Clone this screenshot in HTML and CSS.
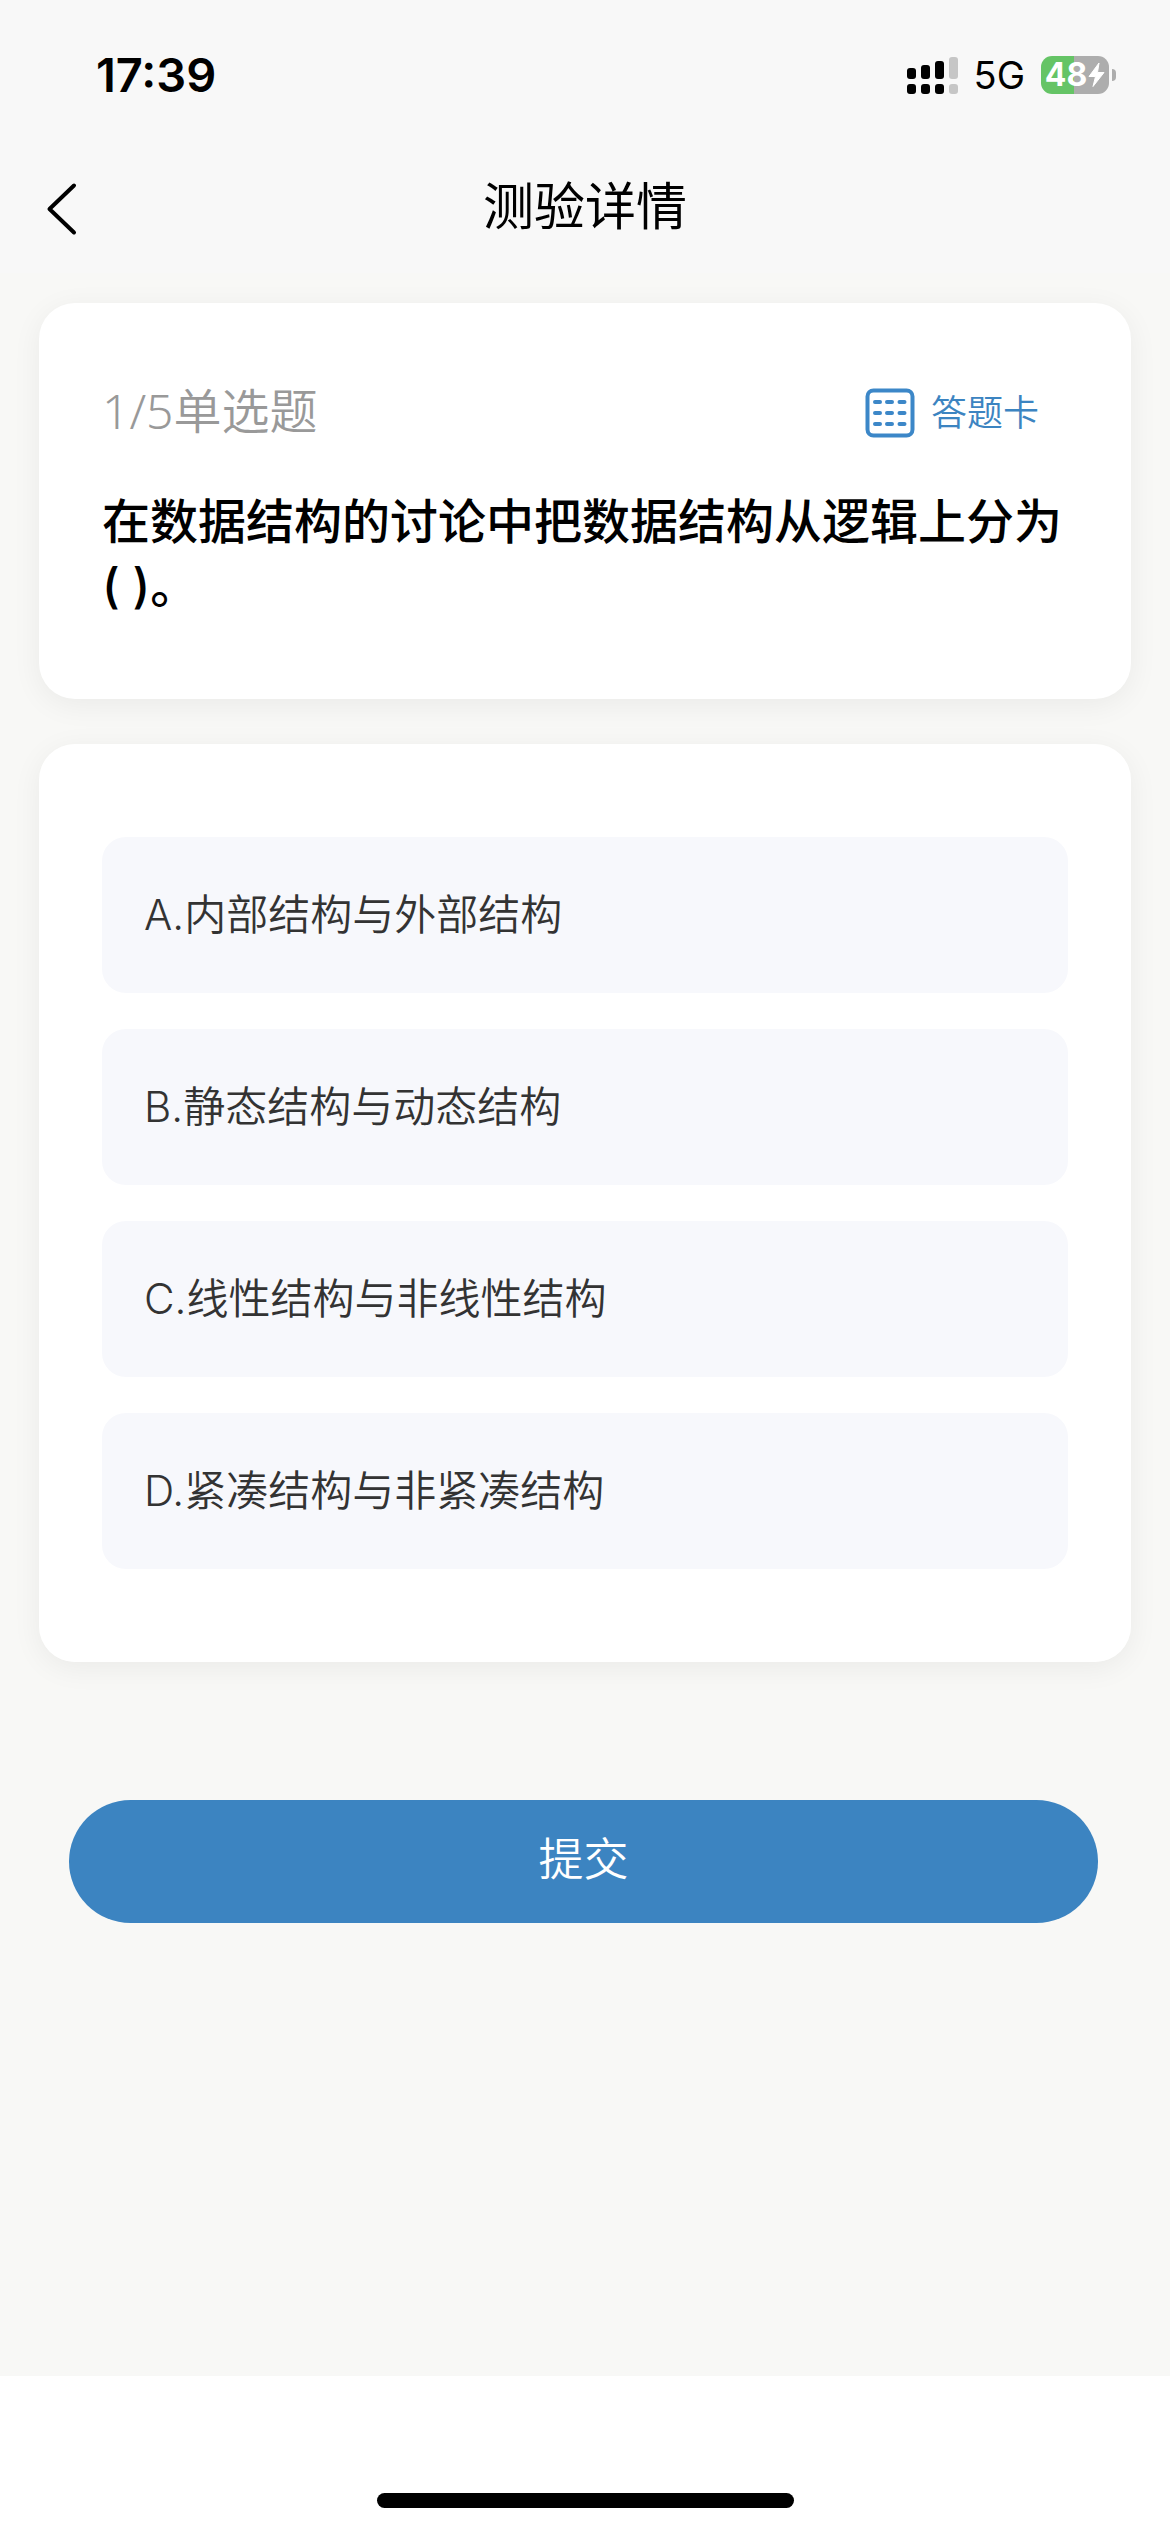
FILE: index.html
```html
<!DOCTYPE html>
<html lang="zh-CN">
<head>
  <meta charset="utf-8">
  <meta name="viewport" content="width=device-width, initial-scale=1">
  <title>测验详情</title>
  <link rel="stylesheet" href="styles.css">
</head>
<body>
  <div class="status-bar">
    <span class="status-time">17:39</span>
    <div class="status-icons">
      <svg class="signal" width="51" height="38" viewBox="0 0 51 38" aria-hidden="true">
        <rect x="0" y="12" width="9" height="11" rx="3"/>
        <rect x="14" y="9" width="9" height="14" rx="3"/>
        <rect x="28" y="5" width="9" height="18" rx="3"/>
        <rect class="signal-off" x="42" y="1" width="9" height="22" rx="3"/>
        <rect x="0" y="28" width="9" height="10" rx="3"/>
        <rect x="14" y="28" width="9" height="10" rx="3"/>
        <rect x="28" y="28" width="9" height="10" rx="3"/>
        <rect class="signal-off" x="42" y="28" width="9" height="10" rx="3"/>
      </svg>
      <span class="network">5G</span>
      <div class="battery">
        <div class="battery-body">
          <span class="battery-level">48</span>
          <svg width="17" height="26" viewBox="0 0 17 26" aria-hidden="true">
            <path d="M11 1 1 14.500h6.500L5 24.500 16 10.500H9.500z" fill="#fff" stroke="#fff" stroke-width="1" stroke-linejoin="round"/>
          </svg>
        </div>
        <div class="battery-cap"></div>
      </div>
    </div>
  </div>

  <header class="nav-bar">
    <button class="back" type="button" aria-label="返回">
      <svg width="32" height="54" viewBox="0 0 32 54" aria-hidden="true">
        <path d="M28 3.500 3.500 27 28 50.500" fill="none" stroke="#000" stroke-width="4" stroke-linecap="round" stroke-linejoin="round"/>
      </svg>
    </button>
    <h1 class="nav-title">测验详情</h1>
  </header>

  <main class="page">
    <section class="card question">
      <div class="question-meta">
        <span class="question-type">1/5单选题</span>
        <a class="answer-card" href="#">
          <svg width="50" height="50" viewBox="0 0 50 50" fill="none" stroke="#3c87c8" aria-hidden="true">
            <rect x="2.500" y="2.500" width="45" height="45" rx="6" stroke-width="4"/>
            <path d="M10 14h5M22 14h5M34.500 14h5M10 25h5M22 25h5M34.500 25h5M10 36h5M22 36h5M34.500 36h5" stroke-width="4" stroke-linecap="round"/>
          </svg>
          答题卡
        </a>
      </div>
      <h2 class="question-text">在数据结构的讨论中把数据结构从逻辑上分为( )。</h2>
    </section>

    <form class="quiz">
      <fieldset class="card options" aria-label="选项">
        <label class="option"><input type="radio" name="answer" value="A">A.内部结构与外部结构</label>
        <label class="option"><input type="radio" name="answer" value="B">B.静态结构与动态结构</label>
        <label class="option"><input type="radio" name="answer" value="C">C.线性结构与非线性结构</label>
        <label class="option"><input type="radio" name="answer" value="D">D.紧凑结构与非紧凑结构</label>
      </fieldset>
      <button class="submit" type="submit">提交</button>
    </form>
  </main>

  <footer class="home-area">
    <div class="home-indicator"></div>
  </footer>
</body>
</html>
```
FILE: styles.css
```css
* {
  box-sizing: border-box;
}

body {
  display: flex;
  flex-direction: column;
  min-height: 100vh;
  margin: 0;
  background: #f8f8f8;
  color: #000;
  font-family: Inter, "Noto Sans CJK SC", sans-serif;
  font-weight: 350;
}

button {
  padding: 0;
  border: 0;
  background: none;
  font: inherit;
}

/* Status bar */
.status-bar {
  display: flex;
  align-items: center;
  justify-content: space-between;
  height: 141px;
  padding: 8px 54px 0 96px;
}

.status-time {
  font-size: 47px;
  font-weight: 600;
  line-height: 54px;
}

.status-icons {
  display: flex;
  align-items: center;
  gap: 16px;
}

.signal {
  display: block;
}

.signal-off {
  fill: #c6c6c6;
}

.network {
  font-size: 38px;
  font-weight: 400;
  line-height: 38px;
}

.battery {
  display: flex;
  align-items: center;
  gap: 3px;
}

.battery-body {
  display: flex;
  align-items: center;
  justify-content: center;
  gap: 1px;
  width: 68px;
  height: 38px;
  border-radius: 11px;
  background: linear-gradient(to right, #65c466 48%, #adadad 48%);
}

.battery-level {
  color: #fff;
  font-size: 32px;
  font-weight: 700;
  line-height: 38px;
}

.battery-cap {
  width: 4px;
  height: 12px;
  border-radius: 0 4px 4px 0;
  background: #adadad;
}

.status-bar,
.nav-bar {
  flex: none;
}

/* Navigation bar */
.nav-bar {
  display: grid;
  grid-template-columns: 78px 1fr 78px;
  align-items: center;
  height: 132px;
}

.back {
  display: flex;
  justify-content: flex-end;
  padding-top: 4px;
}

.nav-title {
  margin: 0;
  font-size: 51px;
  font-weight: 400;
  line-height: 72px;
  text-align: center;
}

/* Content */
.page {
  flex: 1;
  padding: 30px 39px;
  background: #f8f8f6;
}

.card {
  margin: 0;
  border: 0;
  border-radius: 36px;
  background: #fff;
  box-shadow: 0 6px 30px rgba(0, 0, 0, 0.06);
}

.question {
  padding: 77px 63px 81px;
}

.question-meta {
  display: flex;
  align-items: center;
  justify-content: space-between;
  height: 66px;
  padding-right: 29px;
}

.question-type {
  padding-bottom: 4px;
  color: #999;
  font-family: "Noto Sans", "Noto Sans CJK SC", sans-serif;
  font-size: 48px;
  line-height: 66px;
}

.answer-card {
  display: flex;
  align-items: center;
  gap: 16px;
  color: #3c84c1;
  font-size: 36px;
  line-height: 48px;
  text-decoration: none;
}

.question-text {
  margin: 44px 0 0;
  font-size: 48px;
  font-weight: 500;
  line-height: 64px;
}

.options {
  display: flex;
  flex-direction: column;
  gap: 36px;
  margin-top: 45px;
  padding: 93px 63px;
}

.option {
  display: flex;
  align-items: center;
  min-height: 156px;
  padding: 0 42px;
  border-radius: 24px;
  background: #f7f8fc;
  color: #333;
  font-size: 42px;
  line-height: 60px;
}

.option input {
  appearance: none;
  width: 0;
  height: 0;
  margin: 0;
}

.option:has(input:checked) {
  background: #e3effa;
}

.quiz {
  display: flex;
  flex-direction: column;
}

.submit {
  height: 123px;
  margin: 138px 33px 0 30px;
  padding-bottom: 3px;
  border-radius: 62px;
  background: #3c84c1;
  color: #fff;
  font-size: 45px;
  line-height: 60px;
}

/* Home indicator */
.home-area {
  display: flex;
  align-items: flex-end;
  justify-content: center;
  height: 156px;
  padding-bottom: 24px;
  background: #fff;
}

.home-indicator {
  width: 417px;
  height: 15px;
  border-radius: 8px;
  background: #000;
}
```
